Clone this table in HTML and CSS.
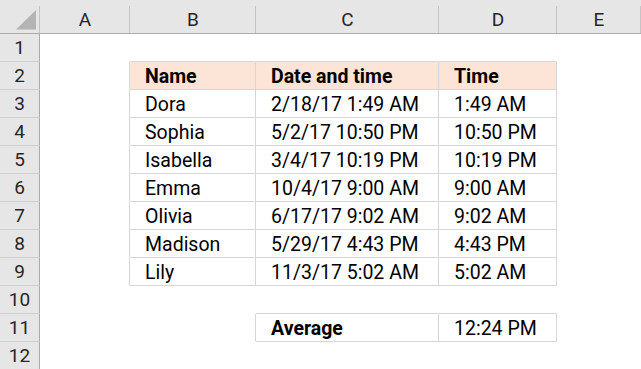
FILE: index.html
```html
<!DOCTYPE html>
<html>
<head>
<meta charset="utf-8">
<link rel="stylesheet" href="styles.css">
</head>
<body>
<div class="sheet">
  <div class="corner"><svg width="40" height="33" viewBox="0 0 40 33"><polygon points="16,29.5 36,29.5 36,10" fill="#b4b4b4"/></svg></div>
  <div class="ch">A</div><div class="ch">B</div><div class="ch">C</div><div class="ch">D</div><div class="ch">E</div>

  <div class="rh">1</div><div class="c"></div><div class="c bb"></div><div class="c bb"></div><div class="c bb"></div><div class="c"></div>

  <div class="rh">2</div><div class="c br"></div><div class="c br bb th">Name</div><div class="c br bb th">Date and time</div><div class="c br bb th">Time</div><div class="c"></div>

  <div class="rh">3</div><div class="c br"></div><div class="c br bb">Dora</div><div class="c br bb">2/18/17 1:49 AM</div><div class="c br bb">1:49 AM</div><div class="c"></div>

  <div class="rh">4</div><div class="c br"></div><div class="c br bb">Sophia</div><div class="c br bb">5/2/17 10:50 PM</div><div class="c br bb">10:50 PM</div><div class="c"></div>

  <div class="rh">5</div><div class="c br"></div><div class="c br bb">Isabella</div><div class="c br bb">3/4/17 10:19 PM</div><div class="c br bb">10:19 PM</div><div class="c"></div>

  <div class="rh">6</div><div class="c br"></div><div class="c br bb">Emma</div><div class="c br bb">10/4/17 9:00 AM</div><div class="c br bb">9:00 AM</div><div class="c"></div>

  <div class="rh">7</div><div class="c br"></div><div class="c br bb">Olivia</div><div class="c br bb">6/17/17 9:02 AM</div><div class="c br bb">9:02 AM</div><div class="c"></div>

  <div class="rh">8</div><div class="c br"></div><div class="c br bb">Madison</div><div class="c br bb">5/29/17 4:43 PM</div><div class="c br bb">4:43 PM</div><div class="c"></div>

  <div class="rh">9</div><div class="c br"></div><div class="c br bb">Lily</div><div class="c br bb">11/3/17 5:02 AM</div><div class="c br bb">5:02 AM</div><div class="c"></div>

  <div class="rh">10</div><div class="c"></div><div class="c"></div><div class="c bb"></div><div class="c bb"></div><div class="c"></div>

  <div class="rh">11</div><div class="c"></div><div class="c br"></div><div class="c br bb b">Average</div><div class="c br bb">12:24 PM</div><div class="c"></div>

  <div class="rh">12</div><div class="c"></div><div class="c"></div><div class="c"></div><div class="c"></div><div class="c"></div>
</div>
</body>
</html>
```
FILE: styles.css
```css
html, body {
  margin: 0;
  padding: 0;
  background: #ffffff;
}

body {
  width: 641px;
  height: 369px;
  overflow: hidden;
  font-family: Roboto, "Liberation Sans", sans-serif;
  font-size: 19.5px;
  color: #000000;
}

.sheet {
  display: grid;
  grid-template-columns: 40px 90px 126px 183px 118px 1fr;
  grid-template-rows: 34px repeat(12, 28px);
}

.sheet > div {
  box-sizing: border-box;
  white-space: nowrap;
  overflow: hidden;
}

.corner {
  background: #e6e6e6 linear-gradient(#c4c4c4, #c4c4c4) no-repeat right 6px / 1px 27px;
  border-bottom: 1px solid #ababab;
}

.corner svg {
  display: block;
}

.ch {
  background: #e6e6e6 linear-gradient(#c4c4c4, #c4c4c4) no-repeat right 6px / 1px 27px;
  border-bottom: 1px solid #ababab;
  color: #262626;
  text-align: center;
  padding-top: 6px;
  line-height: 27px;
  font-size: 19px;
}

.rh {
  background: #e6e6e6;
  border-right: 1px solid #ababab;
  border-bottom: 1px solid #d0d0d0;
  color: #262626;
  text-align: center;
  padding-top: 1px;
  line-height: 26px;
  font-size: 19px;
}

.c {
  background: #ffffff;
  border-right: 1px solid #ffffff;
  border-bottom: 1px solid #ffffff;
  padding: 2px 0 0 15px;
  line-height: 25px;
}

.br {
  border-right-color: #d6d6d6;
}

.bb {
  border-bottom-color: #d6d6d6;
}

.th {
  background: #fce4d6;
  font-weight: 700;
}

.b {
  font-weight: 700;
}
```
